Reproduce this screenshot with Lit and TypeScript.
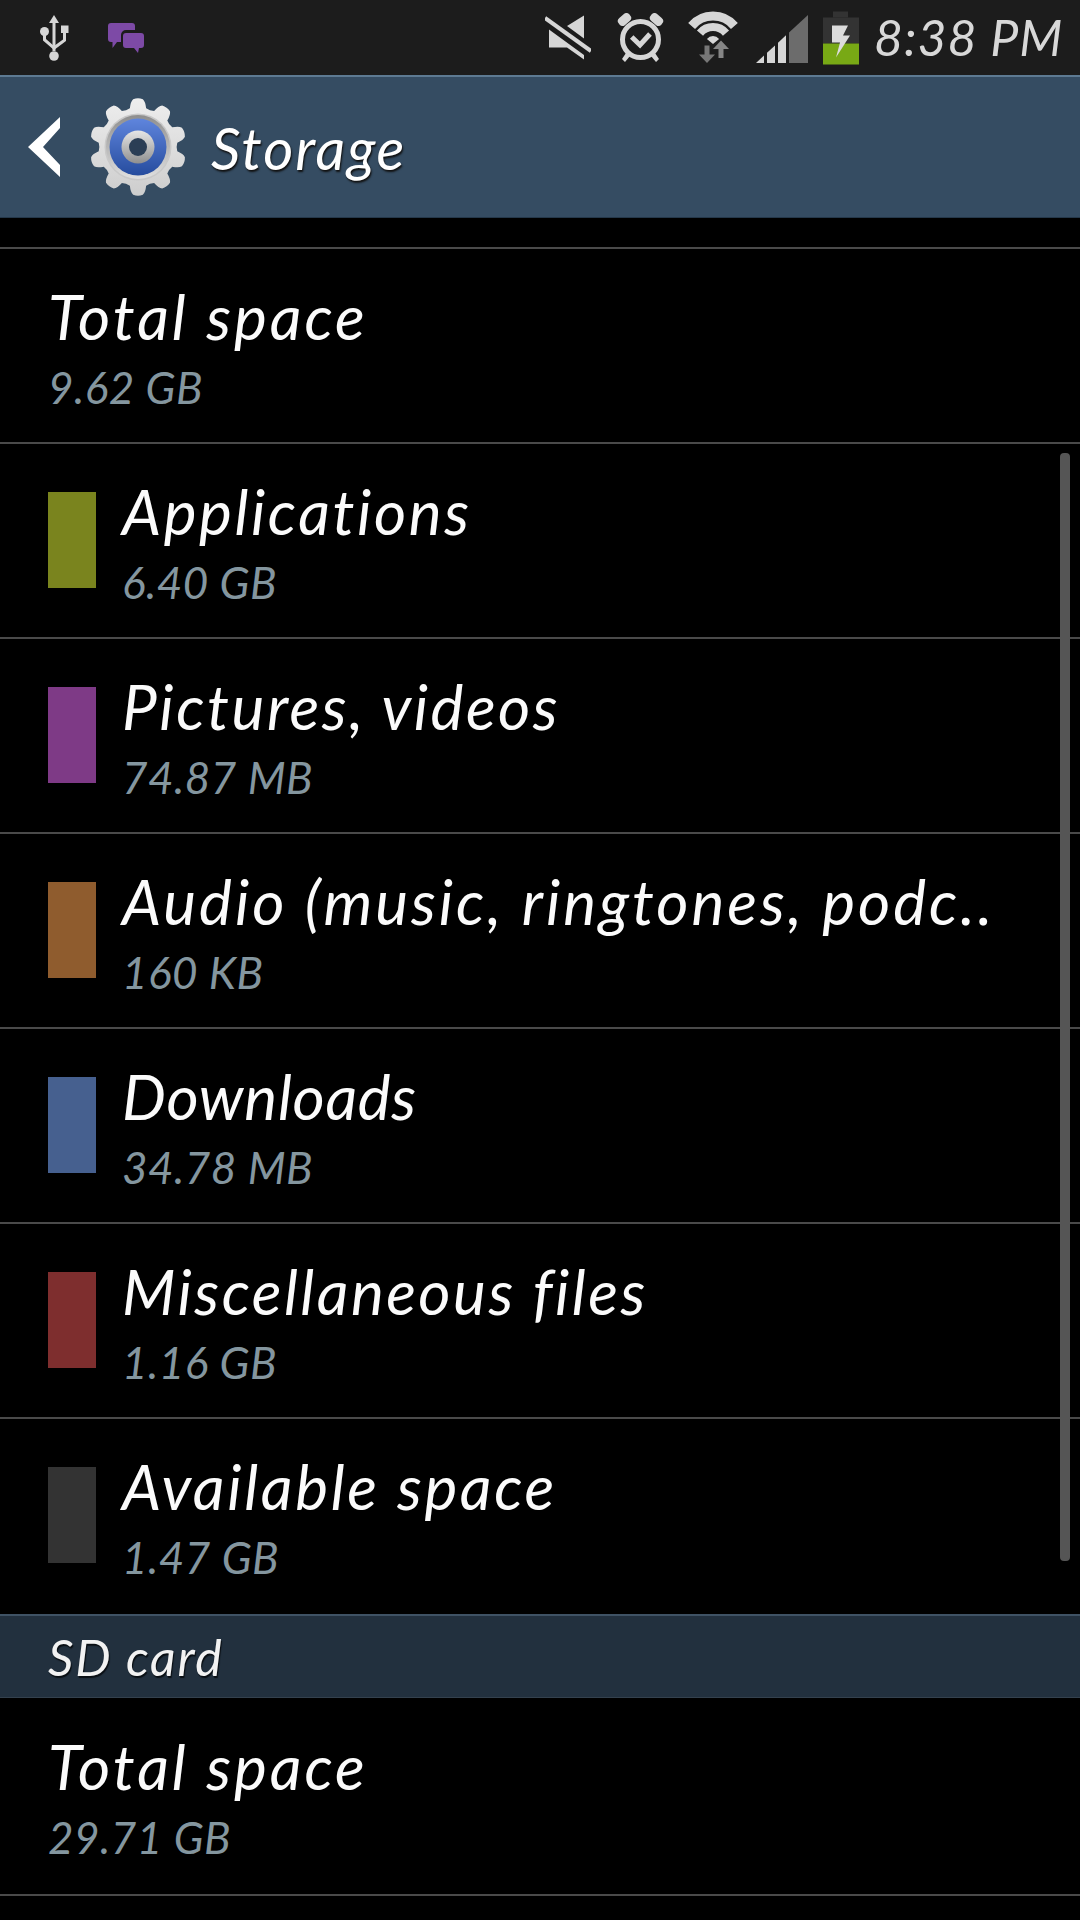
import { LitElement, html, css, svg } from "lit";
import { customElement } from "lit/decorators.js";

function gearPath(cx: number, cy: number, ro: number, ri: number, n: number): string {
  const pts: string[] = [];
  const step = (Math.PI * 2) / n;
  for (let i = 0; i < n; i++) {
    const a = -Math.PI / 2 + i * step;
    const p = (r: number, d: number) => {
      const t = a + d * step;
      return `${(cx + r * Math.cos(t)).toFixed(2)} ${(cy + r * Math.sin(t)).toFixed(2)}`;
    };
    pts.push(`${i === 0 ? "M" : "L"}${p(ri, -0.33)}`);
    pts.push(`Q${p(ro - 3, -0.26)} ${p(ro - 1, -0.16)}`);
    pts.push(`Q${p(ro + 0.5, 0)} ${p(ro - 1, 0.16)}`);
    pts.push(`Q${p(ro - 3, 0.26)} ${p(ri, 0.33)}`);
    pts.push(`Q${p(ri - 1.5, 0.5)} ${p(ri, 0.67)}`);
  }
  return pts.join(" ") + "Z";
}

type Row = { title: string; value: string; color?: string; spacing?: number };

const rows: Row[] = [
  { title: "Total space", value: "9.62 GB" },
  { title: "Applications", value: "6.40 GB", color: "#7a841e", spacing: 2.6 },
  { title: "Pictures, videos", value: "74.87 MB", color: "#7e3a86", spacing: 2.6 },
  { title: "Audio (music, ringtones, podc..", value: "160 KB", color: "#8f5c2e" },
  { title: "Downloads", value: "34.78 MB", color: "#46608f", spacing: 0.7 },
  { title: "Miscellaneous files", value: "1.16 GB", color: "#7e2e2e", spacing: 2.5 },
  { title: "Available space", value: "1.47 GB", color: "#333333", spacing: 2.7 },
];

@customElement("app-root")
export class AppRoot extends LitElement {
  static styles = css`
    :host {
      display: block;
      width: 1080px;
      height: 1920px;
      background: #000;
      overflow: hidden;
      position: relative;
      font-family: "Lato", "Noto Sans", sans-serif;
      font-style: italic;
    }
    .status {
      height: 75px;
      background: #1c1c1c;
      display: flex;
      align-items: center;
      padding: 0 0 0 40px;
      box-sizing: border-box;
      color: #d6d6d6;
    }
    .status svg { display: block; flex: none; }
    .usb { width: 29px; height: 46px; }
    .chat { width: 36px; height: 30px; margin-left: 39px; }
    .spacer { flex: 1; }
    .mute { width: 46px; height: 46px; }
    .alarm { width: 47px; height: 50px; margin-left: 26px; }
    .wifi { width: 52px; height: 54px; margin-left: 23px; }
    .signal { width: 52px; height: 48px; margin-left: 17px; margin-top: 3px; }
    .battery { width: 36px; height: 54px; margin-left: 15px; }
    .time {
      width: 206px;
      flex: none;
      margin-left: 15px;
      font-size: 50px;
      line-height: 75px;
      letter-spacing: 1px;
      white-space: nowrap;
      color: #d8d8d8;
      font-weight: 400;
    }
    .header {
      height: 143px;
      box-sizing: border-box;
      background: #354c62;
      border-top: 2px solid #5d7a92;
      border-bottom: 1px solid #25384a;
      display: flex;
      align-items: center;
      padding-left: 26px;
    }
    .back { width: 36px; height: 64px; flex: none; }
    .gear { width: 96px; height: 96px; margin-left: 28px; flex: none; overflow: visible; }
    .header-title {
      margin-left: 25px;
      font-size: 58px;
      color: #fff;
      letter-spacing: 2px;
      text-shadow: 1px 2px 2px #111;
    }
    .gap { height: 29px; border-bottom: 2px solid #4a4a4a; }
    .row {
      height: 193px;
      box-sizing: border-box;
      display: flex;
      align-items: center;
      padding-left: 48px;
      gap: 26px;
    }
    .row.last { height: 196px; }
    .sep { height: 2px; background: #4a4a4a; }
    .swatch { width: 48px; height: 96px; flex: none; margin-bottom: 1px; }
    .texts { display: flex; flex-direction: column; padding-top: 7px; }
    .title {
      font-size: 62px;
      line-height: 70px;
      color: #fbfbfb;
      letter-spacing: 3px;
      white-space: nowrap;
    }
    .value {
      font-size: 44px;
      line-height: 62px;
      margin-top: 5px;
      color: #84969f;
      letter-spacing: 0.5px;
      white-space: nowrap;
    }
    .section {
      height: 84px;
      margin-top: 2px;
      box-sizing: border-box;
      background: #22303e;
      border-top: 2px solid #3f5264;
      border-bottom: 1px solid #34414e;
      display: flex;
      align-items: center;
      padding-left: 48px;
      font-size: 50px;
      color: #f2f2f2;
      letter-spacing: 1.8px;
      text-shadow: 1px 2px 1px #0a0f14;
    }
    .scrollbar {
      position: absolute;
      left: 1060px;
      top: 453px;
      width: 10px;
      height: 1108px;
      border-radius: 4px;
      background: #555;
    }
  `;

  private row(r: Row, last = false) {
    return html`<div class="row ${last ? "last" : ""}">
      ${r.color ? html`<div class="swatch" style="background:${r.color}"></div>` : null}
      <div class="texts">
        <div class="title" style=${r.spacing !== undefined ? `letter-spacing:${r.spacing}px` : ""}>${r.title}</div>
        <div class="value">${r.value}</div>
      </div>
    </div>`;
  }

  render() {
    return html`
      <div class="status">
        <svg class="usb" viewBox="0 0 29 46" fill="#d6d6d6">
          <path d="M14 0l5 8h-3.500v28h-3V8H9z" />
          <circle cx="14" cy="41" r="4.800" />
          <circle cx="4.500" cy="16.500" r="4.500" />
          <rect x="21" y="10.500" width="7.500" height="7.500" />
          <path d="M3 18h3v6l8 7 9-6.500V17h3v9L14 35 3 25.500z" />
        </svg>
        <svg class="chat" viewBox="0 0 36 30" fill="#7d4aa6">
          <path d="M3 0h21a3 3 0 0 1 3 3v4H18a5 5 0 0 0-5 5v7H9l-4.500 6v-6H3a3 3 0 0 1-3-3V3a3 3 0 0 1 3-3z" />
          <path d="M18 10h15a3 3 0 0 1 3 3v9a3 3 0 0 1-3 3h-2l-1 5-4-5h-8a3 3 0 0 1-3-3v-9a3 3 0 0 1 3-3z" />
        </svg>
        <div class="spacer"></div>
        <svg class="mute" viewBox="0 0 46 46">
          <path d="M39 .5V23.500L22 11z" fill="#d6d6d6" />
          <path d="M4 14.500L39 40v4.500L22 32.500H4z" fill="#d6d6d6" />
          <path d="M0 3l46 33" stroke="#d6d6d6" stroke-width="4" />
        </svg>
        <svg class="alarm" viewBox="0 0 47 50">
          <g fill="#d6d6d6">
            <rect x="0.500" y="2" width="14" height="9" rx="4" transform="rotate(-40 7.500 6.500)" />
            <rect x="32.500" y="2" width="14" height="9" rx="4" transform="rotate(40 39.500 6.500)" />
            <path d="M9 40l-4 6 3 3 5-6zM38 40l4 6-3 3-5-6z" />
          </g>
          <circle cx="23.500" cy="26.500" r="18" fill="none" stroke="#d6d6d6" stroke-width="5" />
          <path d="M14.700 24l8.300 8 10-11" fill="none" stroke="#d6d6d6" stroke-width="5" />
        </svg>
        <svg class="wifi" viewBox="0 0 52 54">
          <g fill="none" stroke="#d6d6d6">
            <path d="M4.600 15A28 28 0 0 1 47.400 15" stroke-width="9" />
            <path d="M13 22.100A17 17 0 0 1 39 22.100" stroke-width="8" />
          </g>
          <path d="M26 33L19.900 27.900A8 8 0 0 1 32.100 27.900Z" fill="#d6d6d6" />
          <path d="M17.500 34.500h5v9h5.500l-8 8.500-8-8.500h5.500z" fill="#777" />
          <path d="M34 29.500l8 8.500h-5.500v9h-5v-9H26z" fill="#858585" />
        </svg>
        <svg class="signal" viewBox="0 0 52 48">
          <path d="M0 48l8-7.400V48z" fill="#d6d6d6" />
          <path d="M11 37.800l8-7.300V48h-8z" fill="#d6d6d6" />
          <path d="M22 27.700l8-7.400V48h-8z" fill="#d6d6d6" />
          <path d="M33 17.500L52 0v48H33z" fill="#6c6c6c" />
        </svg>
        <svg class="battery" viewBox="0 0 36 54">
          <rect x="10" y="0.500" width="15" height="6" fill="#333" />
          <rect x="0" y="6.500" width="36" height="26" fill="#333" />
          <rect x="0" y="32.500" width="36" height="21" fill="#78a915" />
          <path d="M9 14.500h16l-5 10h7L13 46.500l4-15H9z" fill="#dcdcdc" />
        </svg>
        <div class="time">8:38 PM</div>
      </div>
      <div class="header">
        <svg class="back" viewBox="0 0 36 64">
          <path d="M34 2v11L17 32l17 18v12L2 32z" fill="#fff" />
        </svg>
        <svg class="gear" viewBox="0 0 96 96">
          <defs>
            <linearGradient id="gm" x1="0" y1="0" x2="0" y2="1">
              <stop offset="0" stop-color="#eeeeee" />
              <stop offset="1" stop-color="#cdcdcd" />
            </linearGradient>
            <linearGradient id="gb" x1="0" y1="0" x2="0" y2="1">
              <stop offset="0" stop-color="#5f85dd" />
              <stop offset="1" stop-color="#264c9e" />
            </linearGradient>
            <linearGradient id="gr" x1="0" y1="0" x2="0" y2="1">
              <stop offset="0" stop-color="#e6e6e6" />
              <stop offset="1" stop-color="#8f8f8f" />
            </linearGradient>
            <linearGradient id="gs" x1="0" y1="0" x2="0" y2="1">
              <stop offset="0" stop-color="#8e8e8e" />
              <stop offset="1" stop-color="#e0e0e0" />
            </linearGradient>
          </defs>
          ${svg`<path d="${gearPath(48, 48, 49, 39.5, 10)}" fill="url(#gm)" />`}
          <circle cx="48" cy="48" r="33.500" fill="#c9c9c9" />
          <circle cx="48" cy="48" r="32" fill="url(#gs)" />
          <circle cx="48" cy="48" r="28.500" fill="url(#gb)" />
          <circle cx="48" cy="48" r="16.500" fill="url(#gr)" />
          <circle cx="48" cy="48" r="9" fill="#2b3e55" />
        </svg>
        <div class="header-title">Storage</div>
      </div>
      <div class="gap"></div>
      ${rows.map(
        (r, i) => html`${this.row(r)}${i < rows.length - 1 ? html`<div class="sep"></div>` : null}`
      )}
      <div class="section">SD card</div>
      ${this.row({ title: "Total space", value: "29.71 GB" }, true)}
      <div class="sep"></div>
      <div class="scrollbar"></div>
    `;
  }
}
